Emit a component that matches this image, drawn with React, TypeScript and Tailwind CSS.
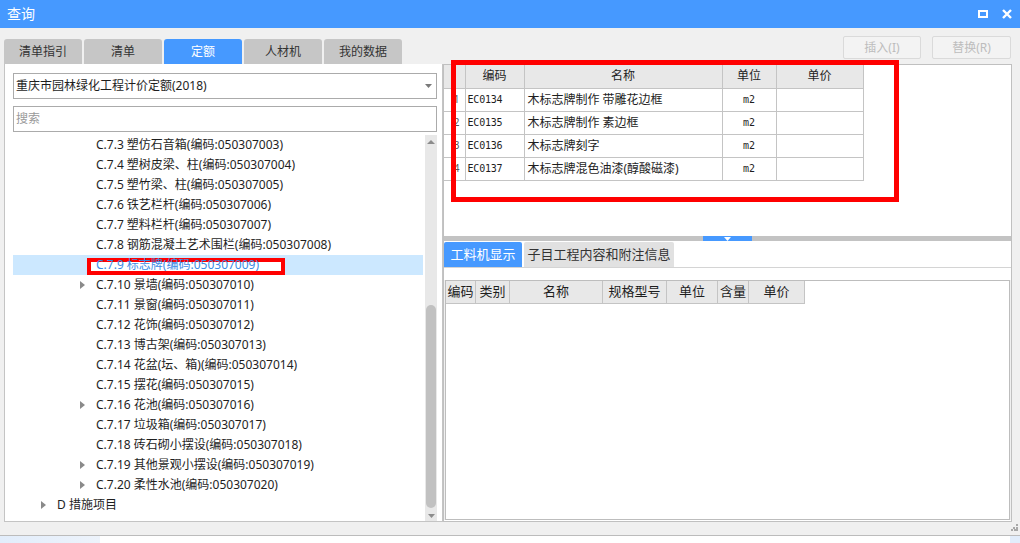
import React from "react";

// tree rows under C.7
interface TreeItem {
  text: string;
  arrow?: boolean;
  selected?: boolean;
}

const treeItems: TreeItem[] = [
  { text: "C.7.3 塑仿石音箱(编码:050307003)" },
  { text: "C.7.4 塑树皮梁、柱(编码:050307004)" },
  { text: "C.7.5 塑竹梁、柱(编码:050307005)" },
  { text: "C.7.6 铁艺栏杆(编码:050307006)" },
  { text: "C.7.7 塑料栏杆(编码:050307007)" },
  { text: "C.7.8 钢筋混凝土艺术围栏(编码:050307008)" },
  { text: "C.7.9 标志牌(编码:050307009)", selected: true },
  { text: "C.7.10 景墙(编码:050307010)", arrow: true },
  { text: "C.7.11 景窗(编码:050307011)" },
  { text: "C.7.12 花饰(编码:050307012)" },
  { text: "C.7.13 博古架(编码:050307013)" },
  { text: "C.7.14 花盆(坛、箱)(编码:050307014)" },
  { text: "C.7.15 摆花(编码:050307015)" },
  { text: "C.7.16 花池(编码:050307016)", arrow: true },
  { text: "C.7.17 垃圾箱(编码:050307017)" },
  { text: "C.7.18 砖石砌小摆设(编码:050307018)" },
  { text: "C.7.19 其他景观小摆设(编码:050307019)", arrow: true },
  { text: "C.7.20 柔性水池(编码:050307020)", arrow: true },
];

const quotaRows = [
  { code: "EC0134", name: "木标志牌制作 带雕花边框", unit: "m2" },
  { code: "EC0135", name: "木标志牌制作 素边框", unit: "m2" },
  { code: "EC0136", name: "木标志牌刻字", unit: "m2" },
  { code: "EC0137", name: "木标志牌混色油漆(醇酸磁漆)", unit: "m2" },
];

const tabs = ["清单指引", "清单", "定额", "人材机", "我的数据"];

function Arrow() {
  return (
    <svg width="5" height="8" viewBox="0 0 5 8">
      <path d="M0 0 L5 4 L0 8 Z" fill="#8a8a8a" />
    </svg>
  );
}

function DownTri({ color = "#7a7a7a" }: { color?: string }) {
  return (
    <svg width="7" height="4" viewBox="0 0 7 4">
      <path d="M0 0 L7 0 L3.5 4 Z" fill={color} />
    </svg>
  );
}

export default function App() {
  return (
    <div className="w-[1020px] h-[543px] bg-[#f0f0f0] flex flex-col overflow-hidden font-['Noto_Sans','Noto_Sans_CJK_SC',sans-serif] text-[12px] text-[#1e1e1e]">
      {/* title bar */}
      <div className="h-[28px] bg-[#4699ff] flex items-center pl-[7px] pr-[8px]">
        <span className="text-white text-[14px] leading-none">查询</span>
        <div className="ml-auto flex items-center gap-[14px]">
          <div className="w-[10px] h-[8px] border-2 border-white" />
          <svg width="10" height="10" viewBox="0 0 10 10">
            <path d="M1 1 L9 9 M9 1 L1 9" stroke="#fff" strokeWidth="2.4" />
          </svg>
        </div>
      </div>

      {/* main */}
      <div className="relative h-[507px] flex pl-[4px]">
        {/* left column */}
        <div className="w-[439px] pt-[11px] flex flex-col">
          <div className="h-[25px] flex gap-[2px]">
            {tabs.map((t) => (
              <div
                key={t}
                className={
                  t === "定额"
                    ? "w-[78px] rounded-t-[3px] bg-[#4699ff] text-white flex items-center justify-center text-[12px]"
                    : "w-[78px] rounded-t-[3px] bg-[#c6c6c6] text-[#333] flex items-center justify-center text-[12px]"
                }
              >
                {t}
              </div>
            ))}
          </div>
          <div className="h-[458px] bg-white border-l border-r border-b border-[#c4c4c4] pl-[8px] pr-[5px] flex flex-col">
            <div className="mt-[9px] h-[26px] w-[424px] border border-[#ababab] flex items-center pl-[2px] pr-[4px]">
              <span>重庆市园林绿化工程计价定额(2018)</span>
              <span className="ml-auto">
                <DownTri />
              </span>
            </div>
            <div className="mt-[7px] h-[26px] w-[424px] border border-[#ababab] flex items-center pl-[2px] text-[#9a9a9a]">
              搜索
            </div>
            <div className="mt-[3px] flex-1 flex">
              <div className="w-[410px] flex flex-col">
                {treeItems.map((it) => (
                  <div
                    key={it.text}
                    className={
                      it.selected
                        ? "relative h-[20px] flex items-center pl-[64px] bg-[#cce8ff] text-[#3c8ce6]"
                        : "relative h-[20px] flex items-center pl-[64px]"
                    }
                  >
                    {it.selected && (
                      <div className="absolute left-[74px] top-[3px] w-[198px] h-[17px] border-4 border-[#ff0000] bg-white" />
                    )}
                    <span className="w-[11px] flex justify-center">
                      {it.arrow && <Arrow />}
                    </span>
                    <span className="relative ml-[8px] whitespace-nowrap">{it.text}</span>
                  </div>
                ))}
                <div className="h-[20px] flex items-center pl-[25px]">
                  <span className="w-[11px] flex justify-center">
                    <Arrow />
                  </span>
                  <span className="ml-[8px]">D 措施项目</span>
                </div>
              </div>
              {/* scrollbar */}
              <div className="ml-[2px] w-[12px] bg-[#e8e8e8] flex flex-col items-center">
                <div className="h-[14px] flex items-center">
                  <svg width="8" height="4" viewBox="0 0 8 4">
                    <path d="M0 4 L8 4 L4 0 Z" fill="#8c8c8c" />
                  </svg>
                </div>
                <div className="flex-1 w-full flex flex-col items-center">
                  <div className="mt-[156px] w-[10px] h-[203px] rounded-full bg-[#c1c1c1]" />
                </div>
                <div className="h-[10px] flex items-center">
                  <DownTri color="#8c8c8c" />
                </div>
              </div>
            </div>
          </div>
        </div>

        {/* right column */}
        <div className="w-[569px] pt-[8px] flex flex-col">
          <div className="h-[23px] flex justify-end gap-[11px] pr-[1px]">
            <div className="w-[78px] border border-[#dadada] rounded-[2px] bg-[#f3f3f3] text-[#bdbdbd] flex items-center justify-center">
              插入(I)
            </div>
            <div className="w-[79px] border border-[#dadada] rounded-[2px] bg-[#f3f3f3] text-[#bdbdbd] flex items-center justify-center">
              替换(R)
            </div>
          </div>
          <div className="mt-[5px] h-[458px] border border-[#c0c0c0] flex flex-col">
            {/* quota list */}
            <div className="relative h-[171px] bg-white">
              <table className="border-collapse text-[12px]">
                <thead>
                  <tr className="h-[23px] bg-[#e8e8e8]">
                    <th className="w-[21px] border-r border-b border-[#c4c4c4] font-normal"></th>
                    <th className="w-[59px] border-r border-b border-[#c4c4c4] font-normal">编码</th>
                    <th className="w-[198px] border-r border-b border-[#c4c4c4] font-normal">名称</th>
                    <th className="w-[54px] border-r border-b border-[#c4c4c4] font-normal">单位</th>
                    <th className="w-[87px] border-r border-b border-[#c4c4c4] font-normal">单价</th>
                  </tr>
                </thead>
                <tbody>
                  {quotaRows.map((r, i) => (
                    <tr key={r.code} className="h-[23px]">
                      <td className="border-r border-b border-[#c4c4c4] text-right pr-[5px] text-[10px] text-[#555]">
                        {i + 1}
                      </td>
                      <td className="border-r border-b border-[#c4c4c4] pl-[2px] font-['DejaVu_Sans_Mono',monospace] text-[10px] tracking-[-0.2px]">
                        {r.code}
                      </td>
                      <td className="border-r border-b border-[#c4c4c4] pl-[3px] whitespace-nowrap">{r.name}</td>
                      <td className="border-r border-b border-[#c4c4c4] text-center font-['DejaVu_Sans_Mono',monospace] text-[10px]">
                        {r.unit}
                      </td>
                      <td className="border-r border-b border-[#c4c4c4]"></td>
                    </tr>
                  ))}
                </tbody>
              </table>
              <div className="absolute left-[7px] top-[-5px] w-[448px] h-[142px] border-[5px] border-[#ff0000]" />
            </div>
            {/* splitter */}
            <div className="h-[5px] flex bg-[#c3c3c3]">
              <div className="w-[259px]" />
              <div className="w-[49px] bg-[#4699ff] flex justify-center items-center">
                <svg width="7" height="4" viewBox="0 0 7 4">
                  <path d="M0 0 L7 0 L3.5 4 Z" fill="#fff" />
                </svg>
              </div>
            </div>
            <div className="h-[1px] bg-white" />
            {/* lower tabs */}
            <div className="h-[25px] bg-white flex gap-[2px]">
              <div className="w-[78px] rounded-t-[2px] bg-[#4699ff] text-white flex items-center justify-center text-[13px]">
                工料机显示
              </div>
              <div className="w-[150px] rounded-t-[2px] bg-[#e1e1e1] text-[#333] flex items-center justify-center text-[13px]">
                子目工程内容和附注信息
              </div>
            </div>
            <div className="h-[1px] bg-[#d4d4d4]" />
            <div className="h-[12px] bg-white" />
            <div className="h-[240px] mx-[1px] border border-[#bdbdbd] bg-white">
              <div className="h-[23px] flex">
                {[
                  ["编码", "w-[30px]"],
                  ["类别", "w-[34px]"],
                  ["名称", "w-[93px]"],
                  ["规格型号", "w-[64px]"],
                  ["单位", "w-[51px]"],
                  ["含量", "w-[31px]"],
                  ["单价", "w-[56px]"],
                ].map(([t, w]) => (
                  <div
                    key={t}
                    className={w + " bg-[#e8e8e8] border-r border-b border-[#c4c4c4] flex items-center justify-center text-[13px] whitespace-nowrap"}
                  >
                    {t}
                  </div>
                ))}
              </div>
            </div>
            <div className="flex-1 bg-white" />
          </div>
        </div>

        {/* resize grip */}
        <svg className="absolute right-[2px] bottom-[4px]" width="7" height="7" viewBox="0 0 7 7">
          <rect x="5" y="0" width="2" height="2" fill="#a8a8a8" />
          <rect x="2" y="3" width="2" height="2" fill="#a8a8a8" />
          <rect x="5" y="3" width="2" height="2" fill="#a8a8a8" />
          <rect x="0" y="5" width="2" height="2" fill="#a8a8a8" />
          <rect x="3" y="5" width="2" height="2" fill="#a8a8a8" />
          <rect x="5" y="5" width="2" height="2" fill="#a8a8a8" />
        </svg>
      </div>

      {/* bottom strip */}
      <div className="h-[1px] bg-[#bcbcbc]" />
      <div className="flex-1 bg-white flex">
        <div className="w-[100px] bg-gradient-to-r from-[#e2edfb] to-[#edf3fb]" />
        <div className="ml-auto w-[10px] bg-[#e2edfb]" />
      </div>
    </div>
  );
}
